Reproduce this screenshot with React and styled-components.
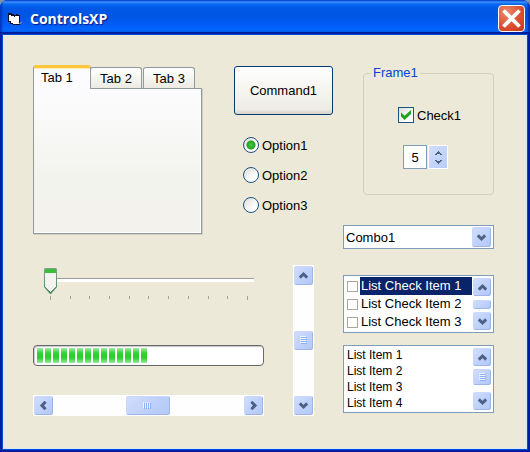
import React, { useState } from "react";
import styled, { createGlobalStyle, css } from "styled-components";

const GlobalStyle = createGlobalStyle`
  *, *::before, *::after { box-sizing: border-box; }
  body { margin: 0; background: #7f93a8; }
  body, button, input, select {
    font-family: "Liberation Sans", Arial, sans-serif;
    font-size: 13px;
    color: #000;
  }
  button { padding: 0; }
`;

const face = "#ece9d8";
const fieldBorder = "#7f9db9";

/* ---------- window ---------- */

const Window = styled.main`
  display: flex;
  flex-direction: column;
  min-height: 100vh;
  overflow: hidden;
  border-radius: 8px 8px 0 0;
  background: #0831d9;
`;

const TitleBar = styled.header`
  display: flex;
  align-items: center;
  height: 35px;
  padding: 2px 5px 0 8px;
  background: linear-gradient(
    #0a55d8 0, #3c93ff 2px, #0a6af2 4px, #0058e6 8px, #0055e5 16px,
    #005cf5 24px, #0066ff 30px, #005be6 32px, #0042c0 35px
  );
  box-shadow: inset 2px 0 2px #0038c0, inset -2px 0 2px #0030b0;
`;

const Title = styled.h1`
  flex: 1;
  margin: 0 0 0 8px;
  font: 700 14px/20px "Open Sans", sans-serif;
  color: #fff;
  text-shadow: 1px 1px 1px #0a1883;
`;

const CloseButton = styled.button`
  display: grid;
  place-items: center;
  width: 27px;
  height: 27px;
  border: 1px solid #fff;
  border-radius: 4px;
  background: radial-gradient(circle at 30% 25%, #ec8a6c, #dc5030 55%, #c03a18);
`;

const Client = styled.div`
  flex: 1;
  display: grid;
  grid-template-columns: minmax(0, 1fr) 151px;
  column-gap: 10px;
  align-content: start;
  margin: 0 3px 3px;
  padding: 30px 32px 30px 30px;
  border: solid #d8e8f8;
  border-width: 0 1px 1px 0;
  background: ${face};
  box-shadow: 0 0 0 1px #0a48d8, 0 0 0 3px #001fa0;
`;

const LeftSide = styled.div`
  display: flex;
  flex-direction: column;
  gap: 31px;
`;

const UpperRow = styled.div`
  display: flex;
  gap: 32px;
`;

const LowerRow = styled.div`
  display: flex;
  gap: 29px;
  padding-right: 19px;
`;

/* ---------- tabs ---------- */

const Tabs = styled.section`
  flex: 1;
  display: flex;
  flex-direction: column;
  height: 169px;
`;

const TabStrip = styled.div`
  display: flex;
  align-items: flex-end;
  height: 23px;
`;

const Tab = styled.button`
  width: 52px;
  height: 21px;
  margin-right: 1px;
  border: 1px solid #919b9c;
  border-bottom-width: 0;
  border-radius: 3px 3px 0 0;
  background: linear-gradient(#fff, #ecebe2);
  ${(p) =>
    p.$active &&
    css`
      z-index: 1;
      width: 58px;
      height: 24px;
      margin: 0 -1px -1px 0;
      padding: 0 7px 3px;
      text-align: left;
      border-top: 3px solid #ffc73c;
      background: #fcfcfe;
      box-shadow: inset 0 1px #ffe9b8;
    `}
`;

const TabPanel = styled.div`
  flex: 1;
  border: 1px solid #919b9c;
  background: linear-gradient(#fcfcfe, #f3f3ee 60%, #f3f2ec);
  box-shadow: inset -1px -1px #fff, 1px 1px #d0cebf;
`;

/* ---------- buttons and options ---------- */

const Actions = styled.div`
  display: flex;
  flex-direction: column;
  width: 99px;
  padding-top: 1px;
`;

const CommandButton = styled.button`
  height: 49px;
  border: 1px solid #003c74;
  border-radius: 3px;
  background: linear-gradient(#fff, #f3f2ec 60%, #ecebe5 90%, #d8d2c8);
`;

const OptionGroup = styled.div`
  display: flex;
  flex-direction: column;
  gap: 10px;
  padding: 20px 0 0 9px;
`;

const Option = styled.label`
  display: flex;
  align-items: center;
  gap: 3px;
  height: 20px;
`;

const Radio = styled.input.attrs({ type: "radio" })`
  appearance: none;
  width: 16px;
  height: 16px;
  margin: 0;
  border: 1px solid #1d5281;
  border-radius: 50%;
  background: linear-gradient(135deg, #dcdcd7, #fff 70%);
  &:checked {
    background: radial-gradient(circle, #4cc94a 0, #21a121 4px, transparent 5px),
      linear-gradient(135deg, #dcdcd7, #fff 70%);
  }
`;

/* ---------- slider, progress ---------- */

const Gauges = styled.div`
  flex: 1;
  display: flex;
  flex-direction: column;
`;

const SliderBox = styled.div`
  height: 80px;
  padding: 3px 10px 0 11px;
`;

const Slider = styled.input.attrs({ type: "range" })`
  appearance: none;
  display: block;
  width: 100%;
  height: 26px;
  margin: 0;
  background: linear-gradient(#9d9c99, #9d9c99) 0 10px / 100% 1px no-repeat,
    linear-gradient(#fff, #fff) 0 11px / 100% 3px no-repeat;
  &::-webkit-slider-thumb {
    appearance: none;
    width: 13px;
    height: 26px;
    background: linear-gradient(#38c038 0 4px, #f3f3ef 4px) 1px 1px / 11px 17px no-repeat,
      conic-gradient(from -45deg at 50% 100%, #f3f3ef 90deg, transparent 0) 1px 12px / 11px 12px no-repeat,
      linear-gradient(#86a08c, #4b8a5c);
    clip-path: polygon(1px 0, 12px 0, 100% 1px, 100% 19px, 7px 100%, 6px 100%, 0 19px, 0 1px);
  }
`;

const Ticks = styled.div`
  display: flex;
  justify-content: space-between;
  padding: 2px 6px 0;
`;

const Tick = styled.span`
  width: 1px;
  height: 3px;
  background: #a5a293;
  &:first-child, &:last-child { height: 4px; }
`;

const Progress = styled.progress`
  appearance: none;
  display: block;
  width: 100%;
  height: 21px;
  padding: 2px 3px;
  border: 1px solid #686868;
  border-radius: 4px;
  background: #fff;
  box-shadow: inset 1px 1px 1px #c8c8c8;
  &::-webkit-progress-bar { background: transparent; }
  &::-webkit-progress-value {
    background: repeating-linear-gradient(90deg, transparent 0 6px, #fff 6px 8px),
      linear-gradient(#a8eaaa, #2fd030 35%, #2cce2e 65%, #9ae69c);
  }
`;

/* ---------- scroll bars ---------- */

const ScrollBar = styled.div`
  display: flex;
  flex-direction: ${(p) => (p.$vertical ? "column" : "row")};
  background: #fefefe;
  ${(p) => (p.$vertical ? `width: ${p.$thick}px;` : `height: ${p.$thick}px;`)}
`;

const HorizontalBar = styled(ScrollBar)`
  margin-top: 29px;
`;

const Track = styled.div`
  flex: ${(p) => p.$grow};
`;

const blueFace = css`
  display: grid;
  place-items: center;
  flex: none;
  border: 1px solid #fff;
  border-radius: 3px;
  background: linear-gradient(135deg, #d2defd, #bdd0fb 60%, #b4c8f6);
  box-shadow: inset -1px -1px #9fb5e8, inset 1px 1px #c9d7fa;
`;

const ArrowButton = styled.button`
  ${blueFace}
  width: ${(p) => p.$size}px;
  height: ${(p) => p.$size}px;
`;

const Thumb = styled.div`
  ${blueFace}
  ${(p) => (p.$vertical ? `height: ${p.$length}px;` : `width: ${p.$length}px;`)}
`;

/* ---------- right side ---------- */

const RightSide = styled.div`
  display: flex;
  flex-direction: column;
`;

const Frame = styled.fieldset`
  display: flex;
  flex-direction: column;
  min-width: 0;
  height: 130px;
  margin: 0 0 30px 20px;
  padding: 26px 0 0 34px;
  border: 1px solid #d0d0bf;
  border-radius: 4px;
`;

const Legend = styled.legend`
  margin-left: -27px;
  padding: 0 2px;
  line-height: 16px;
  color: #0046d5;
`;

const CheckLabel = styled.label`
  display: flex;
  align-items: center;
  gap: 3px;
  height: 16px;
`;

const CheckStack = styled.span`
  display: grid;
  place-items: center;
  > * { grid-area: 1 / 1; }
  svg { pointer-events: none; }
  input:not(:checked) + svg { visibility: hidden; }
`;

const CheckBox = styled.input.attrs({ type: "checkbox" })`
  appearance: none;
  width: ${(p) => p.$size}px;
  height: ${(p) => p.$size}px;
  margin: 0;
  border: 1px solid ${(p) => (p.$muted ? "#aca899" : "#1d5281")};
  background: ${(p) => (p.$muted ? "#fff" : "linear-gradient(135deg, #dcdcd7, #fff 75%)")};
`;

const Spinner = styled.div`
  display: flex;
  align-items: center;
  gap: 1px;
  margin: 22px 0 0 5px;
`;

const SpinField = styled.input`
  width: 24px;
  height: 24px;
  padding: 0;
  border: 1px solid ${fieldBorder};
  background: #fff;
  text-align: center;
`;

const SpinButtons = styled.div`
  display: flex;
  flex-direction: column;
  width: 20px;
  height: 24px;
  padding: 2px 1px;
  border: 1px solid #fff;
  background: linear-gradient(135deg, #d2defd, #b8ccfa);
`;

const SpinButton = styled.button`
  flex: 1;
  display: grid;
  place-items: center;
  border: 0;
  background: transparent;
`;

const Combo = styled.div`
  display: grid;
  grid-template-columns: minmax(0, 1fr) 21px;
  align-items: center;
  height: 24px;
  padding-right: 1px;
  border: 1px solid ${fieldBorder};
  background: #fff;
`;

const ComboSelect = styled.select`
  appearance: none;
  grid-area: 1 / 1 / 2 / 3;
  width: 100%;
  height: 22px;
  padding: 0 22px 0 2px;
  border: 0;
  background: transparent;
`;

const ComboArrow = styled.span`
  ${blueFace}
  grid-area: 1 / 2;
  height: 22px;
  pointer-events: none;
`;

const ListBox = styled.div`
  display: flex;
  margin-top: ${(p) => p.$gap}px;
  padding: 1px;
  border: 1px solid ${fieldBorder};
  background: #fff;
`;

const Items = styled.ul`
  flex: 1;
  margin: 0;
  padding: 0 0 0 2px;
  list-style: none;
`;

const CheckItem = styled.label`
  display: flex;
  align-items: center;
  gap: 2px;
  height: 18px;
`;

const ItemText = styled.span`
  flex: 1;
  padding-left: 1px;
  line-height: 18px;
  white-space: nowrap;
  ${(p) => p.$selected && "background: #0a246a; color: #fff;"}
`;

const PlainItem = styled.li`
  height: 16px;
  font-size: 12px;
  line-height: 16px;
`;

/* ---------- drawings ---------- */

const turns = { up: 0, right: 90, down: 180, left: 270 };

const Chevron = ({ to }) => (
  <svg width="9" height="9" viewBox="0 0 9 9" aria-hidden="true">
    <path
      d="M.8 6.6 4.5 3 8.2 6.6"
      fill="none"
      stroke="#4d6185"
      strokeWidth="3"
      transform={`rotate(${turns[to]} 4.5 4.5)`}
    />
  </svg>
);

const SmallArrow = ({ down }) => (
  <svg width="7" height="4" viewBox="0 0 7 4" shapeRendering="crispEdges" aria-hidden="true">
    <path
      d="M3 0h1v1h1v1h1v1h1v1H5V3H2v1H0V3h1V2h1V1h1z"
      fill="#4d6185"
      transform={down ? "matrix(1 0 0 -1 0 4)" : undefined}
    />
  </svg>
);

const Grip = ({ vertical }) => (
  <svg width="9" height="9" viewBox="0 0 9 9" shapeRendering="crispEdges" aria-hidden="true">
    <g transform={vertical ? "matrix(0 1 1 0 0 0)" : undefined}>
      <path d="M0 1h1v6h-1zM2 1h1v6h-1zM4 1h1v6h-1zM6 1h1v6h-1z" fill="#eef4fe" />
      <path d="M1 2h1v6h-1zM3 2h1v6h-1zM5 2h1v6h-1zM7 2h1v6h-1z" fill="#8cb0f8" />
    </g>
  </svg>
);

const AppIcon = () => (
  <svg width="14" height="14" viewBox="0 0 14 14" shapeRendering="crispEdges" aria-hidden="true">
    <path d="M0 1h4v1h2v1h2V2h2v1h2v10H5v-1H2v-2H0z" fill="#08122c" />
    <path d="M1 3h2v1h3v1h1V4h4v8H5v-1H3V9H1z" fill="#fff" />
    <path d="M12 10h2v1h-1v1h-2v-1h1z" fill="#7a8494" />
  </svg>
);

const CloseCross = () => (
  <svg width="21" height="21" viewBox="0 0 21 21" aria-hidden="true">
    <path d="M2.5 2.5 18.5 18.5M18.5 2.5 2.5 18.5" stroke="#fff" strokeWidth="3.8" />
  </svg>
);

const CheckMark = () => (
  <svg width="10" height="10" viewBox="0 0 10 10" aria-hidden="true">
    <path d="M0 2.6v4L3.6 10 10 4V0L3.6 5.8z" fill="#21a121" />
  </svg>
);

const VerticalScroll = ({ thick, size, thumb, before = 1, after = 1, grip, label }) => (
  <ScrollBar $vertical $thick={thick}>
    <ArrowButton $size={size} aria-label={`${label} up`}><Chevron to="up" /></ArrowButton>
    <Track $grow={before} />
    <Thumb $vertical $length={thumb}>{grip && <Grip vertical />}</Thumb>
    <Track $grow={after} />
    <ArrowButton $size={size} aria-label={`${label} down`}><Chevron to="down" /></ArrowButton>
  </ScrollBar>
);

export default function App() {
  const [tab, setTab] = useState(1);
  const [value, setValue] = useState(5);

  return (
    <>
      <GlobalStyle />
      <Window>
        <TitleBar>
          <AppIcon />
          <Title>ControlsXP</Title>
          <CloseButton aria-label="Close"><CloseCross /></CloseButton>
        </TitleBar>
        <Client>
          <LeftSide>
            <UpperRow>
              <Tabs>
                <TabStrip role="tablist">
                  {[1, 2, 3].map((n) => (
                    <Tab key={n} role="tab" aria-selected={tab === n} $active={tab === n} onClick={() => setTab(n)}>
                      Tab {n}
                    </Tab>
                  ))}
                </TabStrip>
                <TabPanel role="tabpanel" />
              </Tabs>
              <Actions>
                <CommandButton>Command1</CommandButton>
                <OptionGroup role="radiogroup">
                  {[1, 2, 3].map((n) => (
                    <Option key={n}>
                      <Radio name="option" defaultChecked={n === 1} />
                      Option{n}
                    </Option>
                  ))}
                </OptionGroup>
              </Actions>
            </UpperRow>
            <LowerRow>
              <Gauges>
                <SliderBox>
                  <Slider min="0" max="10" defaultValue="0" aria-label="Level" />
                  <Ticks>
                    {Array.from({ length: 11 }, (_, i) => <Tick key={i} />)}
                  </Ticks>
                </SliderBox>
                <Progress max="100" value="50" aria-label="Progress" />
                <HorizontalBar $thick={21}>
                  <ArrowButton $size={21} aria-label="Scroll left"><Chevron to="left" /></ArrowButton>
                  <Track $grow={35} />
                  <Thumb $length={46}><Grip /></Thumb>
                  <Track $grow={36} />
                  <ArrowButton $size={21} aria-label="Scroll right"><Chevron to="right" /></ArrowButton>
                </HorizontalBar>
              </Gauges>
              <VerticalScroll thick={21} size={21} thumb={21} grip label="Scroll" />
            </LowerRow>
          </LeftSide>
          <RightSide>
            <Frame>
              <Legend>Frame1</Legend>
              <CheckLabel>
                <CheckStack>
                  <CheckBox $size={16} defaultChecked />
                  <CheckMark />
                </CheckStack>
                Check1
              </CheckLabel>
              <Spinner>
                <SpinField aria-label="Value" value={value} onChange={(e) => setValue(Number(e.target.value) || 0)} />
                <SpinButtons>
                  <SpinButton aria-label="Increase" onClick={() => setValue(value + 1)}><SmallArrow /></SpinButton>
                  <SpinButton aria-label="Decrease" onClick={() => setValue(value - 1)}><SmallArrow down /></SpinButton>
                </SpinButtons>
              </Spinner>
            </Frame>
            <Combo>
              <ComboSelect aria-label="Combo">
                <option>Combo1</option>
              </ComboSelect>
              <ComboArrow><Chevron to="down" /></ComboArrow>
            </Combo>
            <ListBox $gap={26}>
              <Items>
                {[1, 2, 3].map((n) => (
                  <li key={n}>
                    <CheckItem>
                      <CheckBox $size={11} $muted />
                      <ItemText $selected={n === 1}>List Check Item {n}</ItemText>
                    </CheckItem>
                  </li>
                ))}
              </Items>
              <VerticalScroll thick={20} size={20} thumb={11} label="Check list" />
            </ListBox>
            <ListBox $gap={12}>
              <Items>
                {[1, 2, 3, 4].map((n) => <PlainItem key={n}>List Item {n}</PlainItem>)}
              </Items>
              <VerticalScroll thick={20} size={20} thumb={18} before={1} after={5} grip label="List" />
            </ListBox>
          </RightSide>
        </Client>
      </Window>
    </>
  );
}
